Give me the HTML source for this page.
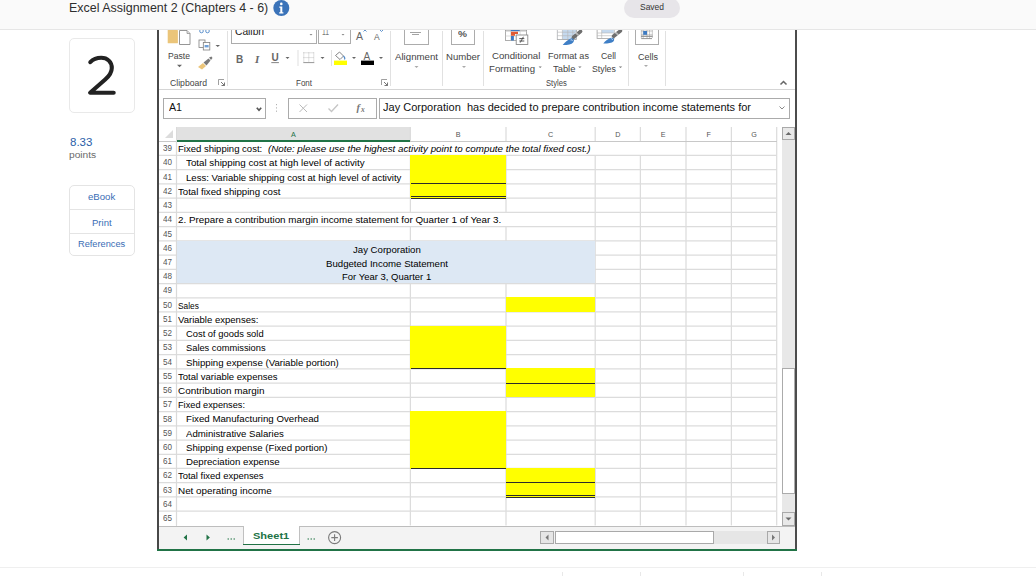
<!DOCTYPE html>
<html><head><meta charset="utf-8"><style>
html,body{margin:0;padding:0;}
body{width:1036px;height:576px;overflow:hidden;position:relative;background:#fff;font-family:"Liberation Sans", sans-serif;}
</style></head><body><div style="position:absolute;left:69px;top:38.3px;width:66px;height:75px;background:transparent;border:1px solid #e9e9e9;border-radius:5px;box-sizing:border-box;"></div><svg style="position:absolute;left:0;top:0" width="140" height="110"><path d="M90.3 62.2 C93 59.4 97 57.8 101.2 57.8 C107.5 57.8 111.8 62 111.8 68 C111.8 72.8 109.2 76 105.2 79.6 L90.1 92.7 L113.7 92.7" fill="none" stroke="#222" stroke-width="4.1" stroke-linecap="round" stroke-linejoin="round"/></svg><div style="position:absolute;left:69px;top:185.3px;width:66px;height:71.2px;background:#fff;border:1px solid #e4e4e4;border-radius:5px;box-sizing:border-box;"></div><div style="position:absolute;left:70px;top:209px;width:64px;height:1px;background:#e4e4e4;"></div><div style="position:absolute;left:70px;top:233px;width:64px;height:1px;background:#e4e4e4;"></div><div style="position:absolute;left:157px;top:30px;width:2px;height:521px;background:#484848;"></div><div style="position:absolute;left:795px;top:30px;width:2px;height:521px;background:#4c4c4c;"></div><div style="position:absolute;left:227px;top:31px;width:1px;height:55px;background:#e1e1e1;"></div><div style="position:absolute;left:390px;top:31px;width:1px;height:55px;background:#e1e1e1;"></div><div style="position:absolute;left:442px;top:31px;width:1px;height:55px;background:#e1e1e1;"></div><div style="position:absolute;left:483px;top:31px;width:1px;height:55px;background:#e1e1e1;"></div><div style="position:absolute;left:628px;top:31px;width:1px;height:55px;background:#e1e1e1;"></div><div style="position:absolute;left:665px;top:31px;width:1px;height:55px;background:#e1e1e1;"></div><div style="position:absolute;left:159px;top:89px;width:636px;height:1px;background:#d5d5d5;"></div><div style="position:absolute;left:163px;top:98px;width:103px;height:21px;background:#fff;border:1px solid #ababab;box-sizing:border-box;"></div><div style="position:absolute;left:288px;top:98px;width:89px;height:21px;background:#fff;border:1px solid #ababab;box-sizing:border-box;"></div><div style="position:absolute;left:379px;top:98px;width:411px;height:21px;background:#fff;border:1px solid #ababab;box-sizing:border-box;"></div><div style="position:absolute;left:159px;top:127px;width:618px;height:14px;background:#fff;"></div><div style="position:absolute;left:177px;top:127px;width:233.4px;height:14px;background:#e1e1e1;"></div><div style="position:absolute;left:177px;top:139.6px;width:233.4px;height:1.6px;background:#217346;"></div><div style="position:absolute;left:159px;top:141px;width:618px;height:1px;background:#d0d0d0;"></div><svg style="position:absolute;left:0;top:0" width="1036" height="576" viewBox="0 0 1036 576"><line x1="159.00" y1="155.48" x2="777.00" y2="155.48" stroke="#dcdcdc" stroke-width="1.25"/><line x1="159.00" y1="169.71" x2="777.00" y2="169.71" stroke="#dcdcdc" stroke-width="1.25"/><line x1="159.00" y1="183.93" x2="777.00" y2="183.93" stroke="#dcdcdc" stroke-width="1.25"/><line x1="159.00" y1="198.16" x2="777.00" y2="198.16" stroke="#dcdcdc" stroke-width="1.25"/><line x1="159.00" y1="212.39" x2="777.00" y2="212.39" stroke="#dcdcdc" stroke-width="1.25"/><line x1="159.00" y1="226.62" x2="777.00" y2="226.62" stroke="#dcdcdc" stroke-width="1.25"/><line x1="159.00" y1="240.85" x2="777.00" y2="240.85" stroke="#dcdcdc" stroke-width="1.25"/><line x1="159.00" y1="255.07" x2="777.00" y2="255.07" stroke="#dcdcdc" stroke-width="1.25"/><line x1="159.00" y1="269.30" x2="777.00" y2="269.30" stroke="#dcdcdc" stroke-width="1.25"/><line x1="159.00" y1="283.53" x2="777.00" y2="283.53" stroke="#dcdcdc" stroke-width="1.25"/><line x1="159.00" y1="297.76" x2="777.00" y2="297.76" stroke="#dcdcdc" stroke-width="1.25"/><line x1="159.00" y1="311.99" x2="777.00" y2="311.99" stroke="#dcdcdc" stroke-width="1.25"/><line x1="159.00" y1="326.21" x2="777.00" y2="326.21" stroke="#dcdcdc" stroke-width="1.25"/><line x1="159.00" y1="340.44" x2="777.00" y2="340.44" stroke="#dcdcdc" stroke-width="1.25"/><line x1="159.00" y1="354.67" x2="777.00" y2="354.67" stroke="#dcdcdc" stroke-width="1.25"/><line x1="159.00" y1="368.90" x2="777.00" y2="368.90" stroke="#dcdcdc" stroke-width="1.25"/><line x1="159.00" y1="383.13" x2="777.00" y2="383.13" stroke="#dcdcdc" stroke-width="1.25"/><line x1="159.00" y1="397.35" x2="777.00" y2="397.35" stroke="#dcdcdc" stroke-width="1.25"/><line x1="159.00" y1="411.58" x2="777.00" y2="411.58" stroke="#dcdcdc" stroke-width="1.25"/><line x1="159.00" y1="425.81" x2="777.00" y2="425.81" stroke="#dcdcdc" stroke-width="1.25"/><line x1="159.00" y1="440.04" x2="777.00" y2="440.04" stroke="#dcdcdc" stroke-width="1.25"/><line x1="159.00" y1="454.27" x2="777.00" y2="454.27" stroke="#dcdcdc" stroke-width="1.25"/><line x1="159.00" y1="468.49" x2="777.00" y2="468.49" stroke="#dcdcdc" stroke-width="1.25"/><line x1="159.00" y1="482.72" x2="777.00" y2="482.72" stroke="#dcdcdc" stroke-width="1.25"/><line x1="159.00" y1="496.95" x2="777.00" y2="496.95" stroke="#dcdcdc" stroke-width="1.25"/><line x1="159.00" y1="511.18" x2="777.00" y2="511.18" stroke="#dcdcdc" stroke-width="1.25"/><line x1="176.50" y1="141.25" x2="176.50" y2="155.48" stroke="#dcdcdc" stroke-width="1.25"/><line x1="176.50" y1="155.48" x2="176.50" y2="169.71" stroke="#dcdcdc" stroke-width="1.25"/><line x1="176.50" y1="169.71" x2="176.50" y2="183.93" stroke="#dcdcdc" stroke-width="1.25"/><line x1="176.50" y1="183.93" x2="176.50" y2="198.16" stroke="#dcdcdc" stroke-width="1.25"/><line x1="176.50" y1="198.16" x2="176.50" y2="212.39" stroke="#dcdcdc" stroke-width="1.25"/><line x1="176.50" y1="212.39" x2="176.50" y2="226.62" stroke="#dcdcdc" stroke-width="1.25"/><line x1="176.50" y1="226.62" x2="176.50" y2="240.85" stroke="#dcdcdc" stroke-width="1.25"/><line x1="176.50" y1="240.85" x2="176.50" y2="255.07" stroke="#dcdcdc" stroke-width="1.25"/><line x1="176.50" y1="255.07" x2="176.50" y2="269.30" stroke="#dcdcdc" stroke-width="1.25"/><line x1="176.50" y1="269.30" x2="176.50" y2="283.53" stroke="#dcdcdc" stroke-width="1.25"/><line x1="176.50" y1="283.53" x2="176.50" y2="297.76" stroke="#dcdcdc" stroke-width="1.25"/><line x1="176.50" y1="297.76" x2="176.50" y2="311.99" stroke="#dcdcdc" stroke-width="1.25"/><line x1="176.50" y1="311.99" x2="176.50" y2="326.21" stroke="#dcdcdc" stroke-width="1.25"/><line x1="176.50" y1="326.21" x2="176.50" y2="340.44" stroke="#dcdcdc" stroke-width="1.25"/><line x1="176.50" y1="340.44" x2="176.50" y2="354.67" stroke="#dcdcdc" stroke-width="1.25"/><line x1="176.50" y1="354.67" x2="176.50" y2="368.90" stroke="#dcdcdc" stroke-width="1.25"/><line x1="176.50" y1="368.90" x2="176.50" y2="383.13" stroke="#dcdcdc" stroke-width="1.25"/><line x1="176.50" y1="383.13" x2="176.50" y2="397.35" stroke="#dcdcdc" stroke-width="1.25"/><line x1="176.50" y1="397.35" x2="176.50" y2="411.58" stroke="#dcdcdc" stroke-width="1.25"/><line x1="176.50" y1="411.58" x2="176.50" y2="425.81" stroke="#dcdcdc" stroke-width="1.25"/><line x1="176.50" y1="425.81" x2="176.50" y2="440.04" stroke="#dcdcdc" stroke-width="1.25"/><line x1="176.50" y1="440.04" x2="176.50" y2="454.27" stroke="#dcdcdc" stroke-width="1.25"/><line x1="176.50" y1="454.27" x2="176.50" y2="468.49" stroke="#dcdcdc" stroke-width="1.25"/><line x1="176.50" y1="468.49" x2="176.50" y2="482.72" stroke="#dcdcdc" stroke-width="1.25"/><line x1="176.50" y1="482.72" x2="176.50" y2="496.95" stroke="#dcdcdc" stroke-width="1.25"/><line x1="176.50" y1="496.95" x2="176.50" y2="511.18" stroke="#dcdcdc" stroke-width="1.25"/><line x1="176.50" y1="511.18" x2="176.50" y2="525.41" stroke="#dcdcdc" stroke-width="1.25"/><line x1="410.40" y1="155.48" x2="410.40" y2="169.71" stroke="#dcdcdc" stroke-width="1.25"/><line x1="410.40" y1="169.71" x2="410.40" y2="183.93" stroke="#dcdcdc" stroke-width="1.25"/><line x1="410.40" y1="183.93" x2="410.40" y2="198.16" stroke="#dcdcdc" stroke-width="1.25"/><line x1="410.40" y1="198.16" x2="410.40" y2="212.39" stroke="#dcdcdc" stroke-width="1.25"/><line x1="410.40" y1="226.62" x2="410.40" y2="240.85" stroke="#dcdcdc" stroke-width="1.25"/><line x1="410.40" y1="283.53" x2="410.40" y2="297.76" stroke="#dcdcdc" stroke-width="1.25"/><line x1="410.40" y1="297.76" x2="410.40" y2="311.99" stroke="#dcdcdc" stroke-width="1.25"/><line x1="410.40" y1="311.99" x2="410.40" y2="326.21" stroke="#dcdcdc" stroke-width="1.25"/><line x1="410.40" y1="326.21" x2="410.40" y2="340.44" stroke="#dcdcdc" stroke-width="1.25"/><line x1="410.40" y1="340.44" x2="410.40" y2="354.67" stroke="#dcdcdc" stroke-width="1.25"/><line x1="410.40" y1="354.67" x2="410.40" y2="368.90" stroke="#dcdcdc" stroke-width="1.25"/><line x1="410.40" y1="368.90" x2="410.40" y2="383.13" stroke="#dcdcdc" stroke-width="1.25"/><line x1="410.40" y1="383.13" x2="410.40" y2="397.35" stroke="#dcdcdc" stroke-width="1.25"/><line x1="410.40" y1="397.35" x2="410.40" y2="411.58" stroke="#dcdcdc" stroke-width="1.25"/><line x1="410.40" y1="411.58" x2="410.40" y2="425.81" stroke="#dcdcdc" stroke-width="1.25"/><line x1="410.40" y1="425.81" x2="410.40" y2="440.04" stroke="#dcdcdc" stroke-width="1.25"/><line x1="410.40" y1="440.04" x2="410.40" y2="454.27" stroke="#dcdcdc" stroke-width="1.25"/><line x1="410.40" y1="454.27" x2="410.40" y2="468.49" stroke="#dcdcdc" stroke-width="1.25"/><line x1="410.40" y1="468.49" x2="410.40" y2="482.72" stroke="#dcdcdc" stroke-width="1.25"/><line x1="410.40" y1="482.72" x2="410.40" y2="496.95" stroke="#dcdcdc" stroke-width="1.25"/><line x1="410.40" y1="496.95" x2="410.40" y2="511.18" stroke="#dcdcdc" stroke-width="1.25"/><line x1="410.40" y1="511.18" x2="410.40" y2="525.41" stroke="#dcdcdc" stroke-width="1.25"/><line x1="506.00" y1="155.48" x2="506.00" y2="169.71" stroke="#dcdcdc" stroke-width="1.25"/><line x1="506.00" y1="169.71" x2="506.00" y2="183.93" stroke="#dcdcdc" stroke-width="1.25"/><line x1="506.00" y1="183.93" x2="506.00" y2="198.16" stroke="#dcdcdc" stroke-width="1.25"/><line x1="506.00" y1="198.16" x2="506.00" y2="212.39" stroke="#dcdcdc" stroke-width="1.25"/><line x1="506.00" y1="226.62" x2="506.00" y2="240.85" stroke="#dcdcdc" stroke-width="1.25"/><line x1="506.00" y1="283.53" x2="506.00" y2="297.76" stroke="#dcdcdc" stroke-width="1.25"/><line x1="506.00" y1="297.76" x2="506.00" y2="311.99" stroke="#dcdcdc" stroke-width="1.25"/><line x1="506.00" y1="311.99" x2="506.00" y2="326.21" stroke="#dcdcdc" stroke-width="1.25"/><line x1="506.00" y1="326.21" x2="506.00" y2="340.44" stroke="#dcdcdc" stroke-width="1.25"/><line x1="506.00" y1="340.44" x2="506.00" y2="354.67" stroke="#dcdcdc" stroke-width="1.25"/><line x1="506.00" y1="354.67" x2="506.00" y2="368.90" stroke="#dcdcdc" stroke-width="1.25"/><line x1="506.00" y1="368.90" x2="506.00" y2="383.13" stroke="#dcdcdc" stroke-width="1.25"/><line x1="506.00" y1="383.13" x2="506.00" y2="397.35" stroke="#dcdcdc" stroke-width="1.25"/><line x1="506.00" y1="397.35" x2="506.00" y2="411.58" stroke="#dcdcdc" stroke-width="1.25"/><line x1="506.00" y1="411.58" x2="506.00" y2="425.81" stroke="#dcdcdc" stroke-width="1.25"/><line x1="506.00" y1="425.81" x2="506.00" y2="440.04" stroke="#dcdcdc" stroke-width="1.25"/><line x1="506.00" y1="440.04" x2="506.00" y2="454.27" stroke="#dcdcdc" stroke-width="1.25"/><line x1="506.00" y1="454.27" x2="506.00" y2="468.49" stroke="#dcdcdc" stroke-width="1.25"/><line x1="506.00" y1="468.49" x2="506.00" y2="482.72" stroke="#dcdcdc" stroke-width="1.25"/><line x1="506.00" y1="482.72" x2="506.00" y2="496.95" stroke="#dcdcdc" stroke-width="1.25"/><line x1="506.00" y1="496.95" x2="506.00" y2="511.18" stroke="#dcdcdc" stroke-width="1.25"/><line x1="506.00" y1="511.18" x2="506.00" y2="525.41" stroke="#dcdcdc" stroke-width="1.25"/><line x1="595.20" y1="155.48" x2="595.20" y2="169.71" stroke="#dcdcdc" stroke-width="1.25"/><line x1="595.20" y1="169.71" x2="595.20" y2="183.93" stroke="#dcdcdc" stroke-width="1.25"/><line x1="595.20" y1="183.93" x2="595.20" y2="198.16" stroke="#dcdcdc" stroke-width="1.25"/><line x1="595.20" y1="198.16" x2="595.20" y2="212.39" stroke="#dcdcdc" stroke-width="1.25"/><line x1="595.20" y1="212.39" x2="595.20" y2="226.62" stroke="#dcdcdc" stroke-width="1.25"/><line x1="595.20" y1="226.62" x2="595.20" y2="240.85" stroke="#dcdcdc" stroke-width="1.25"/><line x1="595.20" y1="240.85" x2="595.20" y2="255.07" stroke="#dcdcdc" stroke-width="1.25"/><line x1="595.20" y1="255.07" x2="595.20" y2="269.30" stroke="#dcdcdc" stroke-width="1.25"/><line x1="595.20" y1="269.30" x2="595.20" y2="283.53" stroke="#dcdcdc" stroke-width="1.25"/><line x1="595.20" y1="283.53" x2="595.20" y2="297.76" stroke="#dcdcdc" stroke-width="1.25"/><line x1="595.20" y1="297.76" x2="595.20" y2="311.99" stroke="#dcdcdc" stroke-width="1.25"/><line x1="595.20" y1="311.99" x2="595.20" y2="326.21" stroke="#dcdcdc" stroke-width="1.25"/><line x1="595.20" y1="326.21" x2="595.20" y2="340.44" stroke="#dcdcdc" stroke-width="1.25"/><line x1="595.20" y1="340.44" x2="595.20" y2="354.67" stroke="#dcdcdc" stroke-width="1.25"/><line x1="595.20" y1="354.67" x2="595.20" y2="368.90" stroke="#dcdcdc" stroke-width="1.25"/><line x1="595.20" y1="368.90" x2="595.20" y2="383.13" stroke="#dcdcdc" stroke-width="1.25"/><line x1="595.20" y1="383.13" x2="595.20" y2="397.35" stroke="#dcdcdc" stroke-width="1.25"/><line x1="595.20" y1="397.35" x2="595.20" y2="411.58" stroke="#dcdcdc" stroke-width="1.25"/><line x1="595.20" y1="411.58" x2="595.20" y2="425.81" stroke="#dcdcdc" stroke-width="1.25"/><line x1="595.20" y1="425.81" x2="595.20" y2="440.04" stroke="#dcdcdc" stroke-width="1.25"/><line x1="595.20" y1="440.04" x2="595.20" y2="454.27" stroke="#dcdcdc" stroke-width="1.25"/><line x1="595.20" y1="454.27" x2="595.20" y2="468.49" stroke="#dcdcdc" stroke-width="1.25"/><line x1="595.20" y1="468.49" x2="595.20" y2="482.72" stroke="#dcdcdc" stroke-width="1.25"/><line x1="595.20" y1="482.72" x2="595.20" y2="496.95" stroke="#dcdcdc" stroke-width="1.25"/><line x1="595.20" y1="496.95" x2="595.20" y2="511.18" stroke="#dcdcdc" stroke-width="1.25"/><line x1="595.20" y1="511.18" x2="595.20" y2="525.41" stroke="#dcdcdc" stroke-width="1.25"/><line x1="640.40" y1="155.48" x2="640.40" y2="169.71" stroke="#dcdcdc" stroke-width="1.25"/><line x1="640.40" y1="169.71" x2="640.40" y2="183.93" stroke="#dcdcdc" stroke-width="1.25"/><line x1="640.40" y1="183.93" x2="640.40" y2="198.16" stroke="#dcdcdc" stroke-width="1.25"/><line x1="640.40" y1="198.16" x2="640.40" y2="212.39" stroke="#dcdcdc" stroke-width="1.25"/><line x1="640.40" y1="212.39" x2="640.40" y2="226.62" stroke="#dcdcdc" stroke-width="1.25"/><line x1="640.40" y1="226.62" x2="640.40" y2="240.85" stroke="#dcdcdc" stroke-width="1.25"/><line x1="640.40" y1="240.85" x2="640.40" y2="255.07" stroke="#dcdcdc" stroke-width="1.25"/><line x1="640.40" y1="255.07" x2="640.40" y2="269.30" stroke="#dcdcdc" stroke-width="1.25"/><line x1="640.40" y1="269.30" x2="640.40" y2="283.53" stroke="#dcdcdc" stroke-width="1.25"/><line x1="640.40" y1="283.53" x2="640.40" y2="297.76" stroke="#dcdcdc" stroke-width="1.25"/><line x1="640.40" y1="297.76" x2="640.40" y2="311.99" stroke="#dcdcdc" stroke-width="1.25"/><line x1="640.40" y1="311.99" x2="640.40" y2="326.21" stroke="#dcdcdc" stroke-width="1.25"/><line x1="640.40" y1="326.21" x2="640.40" y2="340.44" stroke="#dcdcdc" stroke-width="1.25"/><line x1="640.40" y1="340.44" x2="640.40" y2="354.67" stroke="#dcdcdc" stroke-width="1.25"/><line x1="640.40" y1="354.67" x2="640.40" y2="368.90" stroke="#dcdcdc" stroke-width="1.25"/><line x1="640.40" y1="368.90" x2="640.40" y2="383.13" stroke="#dcdcdc" stroke-width="1.25"/><line x1="640.40" y1="383.13" x2="640.40" y2="397.35" stroke="#dcdcdc" stroke-width="1.25"/><line x1="640.40" y1="397.35" x2="640.40" y2="411.58" stroke="#dcdcdc" stroke-width="1.25"/><line x1="640.40" y1="411.58" x2="640.40" y2="425.81" stroke="#dcdcdc" stroke-width="1.25"/><line x1="640.40" y1="425.81" x2="640.40" y2="440.04" stroke="#dcdcdc" stroke-width="1.25"/><line x1="640.40" y1="440.04" x2="640.40" y2="454.27" stroke="#dcdcdc" stroke-width="1.25"/><line x1="640.40" y1="454.27" x2="640.40" y2="468.49" stroke="#dcdcdc" stroke-width="1.25"/><line x1="640.40" y1="468.49" x2="640.40" y2="482.72" stroke="#dcdcdc" stroke-width="1.25"/><line x1="640.40" y1="482.72" x2="640.40" y2="496.95" stroke="#dcdcdc" stroke-width="1.25"/><line x1="640.40" y1="496.95" x2="640.40" y2="511.18" stroke="#dcdcdc" stroke-width="1.25"/><line x1="640.40" y1="511.18" x2="640.40" y2="525.41" stroke="#dcdcdc" stroke-width="1.25"/><line x1="686.00" y1="141.25" x2="686.00" y2="155.48" stroke="#dcdcdc" stroke-width="1.25"/><line x1="686.00" y1="155.48" x2="686.00" y2="169.71" stroke="#dcdcdc" stroke-width="1.25"/><line x1="686.00" y1="169.71" x2="686.00" y2="183.93" stroke="#dcdcdc" stroke-width="1.25"/><line x1="686.00" y1="183.93" x2="686.00" y2="198.16" stroke="#dcdcdc" stroke-width="1.25"/><line x1="686.00" y1="198.16" x2="686.00" y2="212.39" stroke="#dcdcdc" stroke-width="1.25"/><line x1="686.00" y1="212.39" x2="686.00" y2="226.62" stroke="#dcdcdc" stroke-width="1.25"/><line x1="686.00" y1="226.62" x2="686.00" y2="240.85" stroke="#dcdcdc" stroke-width="1.25"/><line x1="686.00" y1="240.85" x2="686.00" y2="255.07" stroke="#dcdcdc" stroke-width="1.25"/><line x1="686.00" y1="255.07" x2="686.00" y2="269.30" stroke="#dcdcdc" stroke-width="1.25"/><line x1="686.00" y1="269.30" x2="686.00" y2="283.53" stroke="#dcdcdc" stroke-width="1.25"/><line x1="686.00" y1="283.53" x2="686.00" y2="297.76" stroke="#dcdcdc" stroke-width="1.25"/><line x1="686.00" y1="297.76" x2="686.00" y2="311.99" stroke="#dcdcdc" stroke-width="1.25"/><line x1="686.00" y1="311.99" x2="686.00" y2="326.21" stroke="#dcdcdc" stroke-width="1.25"/><line x1="686.00" y1="326.21" x2="686.00" y2="340.44" stroke="#dcdcdc" stroke-width="1.25"/><line x1="686.00" y1="340.44" x2="686.00" y2="354.67" stroke="#dcdcdc" stroke-width="1.25"/><line x1="686.00" y1="354.67" x2="686.00" y2="368.90" stroke="#dcdcdc" stroke-width="1.25"/><line x1="686.00" y1="368.90" x2="686.00" y2="383.13" stroke="#dcdcdc" stroke-width="1.25"/><line x1="686.00" y1="383.13" x2="686.00" y2="397.35" stroke="#dcdcdc" stroke-width="1.25"/><line x1="686.00" y1="397.35" x2="686.00" y2="411.58" stroke="#dcdcdc" stroke-width="1.25"/><line x1="686.00" y1="411.58" x2="686.00" y2="425.81" stroke="#dcdcdc" stroke-width="1.25"/><line x1="686.00" y1="425.81" x2="686.00" y2="440.04" stroke="#dcdcdc" stroke-width="1.25"/><line x1="686.00" y1="440.04" x2="686.00" y2="454.27" stroke="#dcdcdc" stroke-width="1.25"/><line x1="686.00" y1="454.27" x2="686.00" y2="468.49" stroke="#dcdcdc" stroke-width="1.25"/><line x1="686.00" y1="468.49" x2="686.00" y2="482.72" stroke="#dcdcdc" stroke-width="1.25"/><line x1="686.00" y1="482.72" x2="686.00" y2="496.95" stroke="#dcdcdc" stroke-width="1.25"/><line x1="686.00" y1="496.95" x2="686.00" y2="511.18" stroke="#dcdcdc" stroke-width="1.25"/><line x1="686.00" y1="511.18" x2="686.00" y2="525.41" stroke="#dcdcdc" stroke-width="1.25"/><line x1="731.40" y1="141.25" x2="731.40" y2="155.48" stroke="#dcdcdc" stroke-width="1.25"/><line x1="731.40" y1="155.48" x2="731.40" y2="169.71" stroke="#dcdcdc" stroke-width="1.25"/><line x1="731.40" y1="169.71" x2="731.40" y2="183.93" stroke="#dcdcdc" stroke-width="1.25"/><line x1="731.40" y1="183.93" x2="731.40" y2="198.16" stroke="#dcdcdc" stroke-width="1.25"/><line x1="731.40" y1="198.16" x2="731.40" y2="212.39" stroke="#dcdcdc" stroke-width="1.25"/><line x1="731.40" y1="212.39" x2="731.40" y2="226.62" stroke="#dcdcdc" stroke-width="1.25"/><line x1="731.40" y1="226.62" x2="731.40" y2="240.85" stroke="#dcdcdc" stroke-width="1.25"/><line x1="731.40" y1="240.85" x2="731.40" y2="255.07" stroke="#dcdcdc" stroke-width="1.25"/><line x1="731.40" y1="255.07" x2="731.40" y2="269.30" stroke="#dcdcdc" stroke-width="1.25"/><line x1="731.40" y1="269.30" x2="731.40" y2="283.53" stroke="#dcdcdc" stroke-width="1.25"/><line x1="731.40" y1="283.53" x2="731.40" y2="297.76" stroke="#dcdcdc" stroke-width="1.25"/><line x1="731.40" y1="297.76" x2="731.40" y2="311.99" stroke="#dcdcdc" stroke-width="1.25"/><line x1="731.40" y1="311.99" x2="731.40" y2="326.21" stroke="#dcdcdc" stroke-width="1.25"/><line x1="731.40" y1="326.21" x2="731.40" y2="340.44" stroke="#dcdcdc" stroke-width="1.25"/><line x1="731.40" y1="340.44" x2="731.40" y2="354.67" stroke="#dcdcdc" stroke-width="1.25"/><line x1="731.40" y1="354.67" x2="731.40" y2="368.90" stroke="#dcdcdc" stroke-width="1.25"/><line x1="731.40" y1="368.90" x2="731.40" y2="383.13" stroke="#dcdcdc" stroke-width="1.25"/><line x1="731.40" y1="383.13" x2="731.40" y2="397.35" stroke="#dcdcdc" stroke-width="1.25"/><line x1="731.40" y1="397.35" x2="731.40" y2="411.58" stroke="#dcdcdc" stroke-width="1.25"/><line x1="731.40" y1="411.58" x2="731.40" y2="425.81" stroke="#dcdcdc" stroke-width="1.25"/><line x1="731.40" y1="425.81" x2="731.40" y2="440.04" stroke="#dcdcdc" stroke-width="1.25"/><line x1="731.40" y1="440.04" x2="731.40" y2="454.27" stroke="#dcdcdc" stroke-width="1.25"/><line x1="731.40" y1="454.27" x2="731.40" y2="468.49" stroke="#dcdcdc" stroke-width="1.25"/><line x1="731.40" y1="468.49" x2="731.40" y2="482.72" stroke="#dcdcdc" stroke-width="1.25"/><line x1="731.40" y1="482.72" x2="731.40" y2="496.95" stroke="#dcdcdc" stroke-width="1.25"/><line x1="731.40" y1="496.95" x2="731.40" y2="511.18" stroke="#dcdcdc" stroke-width="1.25"/><line x1="731.40" y1="511.18" x2="731.40" y2="525.41" stroke="#dcdcdc" stroke-width="1.25"/><line x1="776.70" y1="141.25" x2="776.70" y2="155.48" stroke="#dcdcdc" stroke-width="1.25"/><line x1="776.70" y1="155.48" x2="776.70" y2="169.71" stroke="#dcdcdc" stroke-width="1.25"/><line x1="776.70" y1="169.71" x2="776.70" y2="183.93" stroke="#dcdcdc" stroke-width="1.25"/><line x1="776.70" y1="183.93" x2="776.70" y2="198.16" stroke="#dcdcdc" stroke-width="1.25"/><line x1="776.70" y1="198.16" x2="776.70" y2="212.39" stroke="#dcdcdc" stroke-width="1.25"/><line x1="776.70" y1="212.39" x2="776.70" y2="226.62" stroke="#dcdcdc" stroke-width="1.25"/><line x1="776.70" y1="226.62" x2="776.70" y2="240.85" stroke="#dcdcdc" stroke-width="1.25"/><line x1="776.70" y1="240.85" x2="776.70" y2="255.07" stroke="#dcdcdc" stroke-width="1.25"/><line x1="776.70" y1="255.07" x2="776.70" y2="269.30" stroke="#dcdcdc" stroke-width="1.25"/><line x1="776.70" y1="269.30" x2="776.70" y2="283.53" stroke="#dcdcdc" stroke-width="1.25"/><line x1="776.70" y1="283.53" x2="776.70" y2="297.76" stroke="#dcdcdc" stroke-width="1.25"/><line x1="776.70" y1="297.76" x2="776.70" y2="311.99" stroke="#dcdcdc" stroke-width="1.25"/><line x1="776.70" y1="311.99" x2="776.70" y2="326.21" stroke="#dcdcdc" stroke-width="1.25"/><line x1="776.70" y1="326.21" x2="776.70" y2="340.44" stroke="#dcdcdc" stroke-width="1.25"/><line x1="776.70" y1="340.44" x2="776.70" y2="354.67" stroke="#dcdcdc" stroke-width="1.25"/><line x1="776.70" y1="354.67" x2="776.70" y2="368.90" stroke="#dcdcdc" stroke-width="1.25"/><line x1="776.70" y1="368.90" x2="776.70" y2="383.13" stroke="#dcdcdc" stroke-width="1.25"/><line x1="776.70" y1="383.13" x2="776.70" y2="397.35" stroke="#dcdcdc" stroke-width="1.25"/><line x1="776.70" y1="397.35" x2="776.70" y2="411.58" stroke="#dcdcdc" stroke-width="1.25"/><line x1="776.70" y1="411.58" x2="776.70" y2="425.81" stroke="#dcdcdc" stroke-width="1.25"/><line x1="776.70" y1="425.81" x2="776.70" y2="440.04" stroke="#dcdcdc" stroke-width="1.25"/><line x1="776.70" y1="440.04" x2="776.70" y2="454.27" stroke="#dcdcdc" stroke-width="1.25"/><line x1="776.70" y1="454.27" x2="776.70" y2="468.49" stroke="#dcdcdc" stroke-width="1.25"/><line x1="776.70" y1="468.49" x2="776.70" y2="482.72" stroke="#dcdcdc" stroke-width="1.25"/><line x1="776.70" y1="482.72" x2="776.70" y2="496.95" stroke="#dcdcdc" stroke-width="1.25"/><line x1="776.70" y1="496.95" x2="776.70" y2="511.18" stroke="#dcdcdc" stroke-width="1.25"/><line x1="776.70" y1="511.18" x2="776.70" y2="525.41" stroke="#dcdcdc" stroke-width="1.25"/><line x1="410.40" y1="127.00" x2="410.40" y2="141.00" stroke="#dcdcdc" stroke-width="1.25"/><line x1="506.00" y1="127.00" x2="506.00" y2="141.00" stroke="#dcdcdc" stroke-width="1.25"/><line x1="595.20" y1="127.00" x2="595.20" y2="141.00" stroke="#dcdcdc" stroke-width="1.25"/><line x1="640.40" y1="127.00" x2="640.40" y2="141.00" stroke="#dcdcdc" stroke-width="1.25"/><line x1="686.00" y1="127.00" x2="686.00" y2="141.00" stroke="#dcdcdc" stroke-width="1.25"/><line x1="731.40" y1="127.00" x2="731.40" y2="141.00" stroke="#dcdcdc" stroke-width="1.25"/><line x1="776.70" y1="127.00" x2="776.70" y2="141.00" stroke="#dcdcdc" stroke-width="1.25"/></svg><div style="position:absolute;left:159px;top:140.75px;width:618px;height:1px;background:#c8c8c8;"></div><div style="position:absolute;left:177px;top:139.5px;width:233.4px;height:2px;background:#217346;"></div><div style="position:absolute;left:176px;top:127px;width:1px;height:399px;background:#dadada;"></div><svg style="position:absolute;left:163px;top:128px" width="12" height="12"><path d="M10 2 L10 10 L2 10 Z" fill="#dcdcdc"/></svg><div style="position:absolute;left:176.6px;top:240.546px;width:418.40000000000003px;height:42.78399999999997px;background:#dde8f4;"></div><div style="position:absolute;left:410.09999999999997px;top:155.078px;width:95.60000000000002px;height:43.184px;background:#ffff00;"></div><div style="position:absolute;left:505.7px;top:297.35800000000006px;width:89.20000000000005px;height:14.727999999999952px;background:#ffff00;"></div><div style="position:absolute;left:410.09999999999997px;top:325.814px;width:95.60000000000002px;height:43.184000000000026px;background:#ffff00;"></div><div style="position:absolute;left:505.7px;top:368.49800000000005px;width:89.20000000000005px;height:28.95599999999996px;background:#ffff00;"></div><div style="position:absolute;left:410.09999999999997px;top:411.182px;width:95.60000000000002px;height:57.41199999999998px;background:#ffff00;"></div><div style="position:absolute;left:505.7px;top:468.094px;width:89.20000000000005px;height:28.956000000000017px;background:#ffff00;"></div><div style="position:absolute;left:410.59999999999997px;top:183.434px;width:95.10000000000002px;height:1.0px;background:#2b2b2b;"></div><div style="position:absolute;left:410.59999999999997px;top:196.262px;width:95.10000000000002px;height:1.0px;background:#2b2b2b;"></div><div style="position:absolute;left:410.59999999999997px;top:198.362px;width:95.10000000000002px;height:1.0px;background:#2b2b2b;"></div><div style="position:absolute;left:410.59999999999997px;top:368.398px;width:95.10000000000002px;height:1.0px;background:#2b2b2b;"></div><div style="position:absolute;left:506.2px;top:382.626px;width:88.70000000000005px;height:1.0px;background:#2b2b2b;"></div><div style="position:absolute;left:410.59999999999997px;top:467.99399999999997px;width:95.10000000000002px;height:1.0px;background:#2b2b2b;"></div><div style="position:absolute;left:506.2px;top:482.222px;width:88.70000000000005px;height:1.0px;background:#2b2b2b;"></div><div style="position:absolute;left:506.2px;top:495.04999999999995px;width:88.70000000000005px;height:1.0px;background:#2b2b2b;"></div><div style="position:absolute;left:506.2px;top:497.15px;width:88.70000000000005px;height:1.0px;background:#2b2b2b;"></div><div style="position:absolute;left:782px;top:127px;width:13px;height:398.5px;background:#e8e8e8;"></div><div style="position:absolute;left:782px;top:127px;width:13px;height:13px;background:#e8e8e8;border:1px solid #a9a9a9;box-sizing:border-box;"></div><svg style="position:absolute;left:782px;top:127px" width="13" height="13"><path d="M3.5 8 L6.5 5 L9.5 8 Z" fill="#6a6a6a"/></svg><div style="position:absolute;left:782px;top:368px;width:13px;height:125.5px;background:#fff;border:1px solid #ababab;box-sizing:border-box;"></div><div style="position:absolute;left:782px;top:512px;width:13px;height:13.5px;background:#e8e8e8;border:1px solid #a9a9a9;box-sizing:border-box;"></div><svg style="position:absolute;left:782px;top:512px" width="13" height="13"><path d="M3.5 5.5 L6.5 8.5 L9.5 5.5 Z" fill="#6a6a6a"/></svg><div style="position:absolute;left:159px;top:525.5px;width:636px;height:24px;background:#f3f3f3;"></div><div style="position:absolute;left:159px;top:525.5px;width:636px;height:1px;background:#bdbdbd;"></div><div style="position:absolute;left:157px;top:549px;width:640px;height:2px;background:#217346;"></div><div style="position:absolute;left:243.3px;top:525.5px;width:56.5px;height:19.5px;background:#fff;border:1px solid #c0c0c0;border-top:none;box-sizing:border-box;"></div><div style="position:absolute;left:243.3px;top:543.6px;width:56.5px;height:1.6px;background:#217346;"></div><svg style="position:absolute;left:180px;top:532px" width="40" height="12"><path d="M7 2.5 L3.6 5.5 L7 8.5 Z" fill="#217346"/><path d="M26.5 2.5 L29.9 5.5 L26.5 8.5 Z" fill="#217346"/></svg><svg style="position:absolute;left:226px;top:536px" width="12" height="5"><circle cx="2.2" cy="3" r="0.75" fill="#2f7d50"/><circle cx="5.2" cy="3" r="0.75" fill="#2f7d50"/><circle cx="8.2" cy="3" r="0.75" fill="#2f7d50"/></svg><svg style="position:absolute;left:306px;top:536px" width="12" height="5"><circle cx="2.2" cy="3" r="0.75" fill="#2f7d50"/><circle cx="5.2" cy="3" r="0.75" fill="#2f7d50"/><circle cx="8.2" cy="3" r="0.75" fill="#2f7d50"/></svg><svg style="position:absolute;left:327px;top:530px" width="15" height="15"><circle cx="7.6" cy="7.6" r="6" fill="none" stroke="#7a7a7a" stroke-width="1.1"/><path d="M7.6 4.3 V10.9 M4.3 7.6 H10.9" stroke="#7a7a7a" stroke-width="1.1"/></svg><div style="position:absolute;left:540.4px;top:531.2px;width:14px;height:12.6px;background:#e6e6e6;border:1px solid #a9a9a9;box-sizing:border-box;"></div><svg style="position:absolute;left:540px;top:531px" width="14" height="13"><path d="M8.5 3.5 L5.5 6.5 L8.5 9.5 Z" fill="#777"/></svg><div style="position:absolute;left:555px;top:531.2px;width:159px;height:12.6px;background:#fff;border:1px solid #a9a9a9;box-sizing:border-box;"></div><div style="position:absolute;left:714px;top:531.2px;width:53px;height:12.6px;background:#e6e6e6;"></div><div style="position:absolute;left:767px;top:531.2px;width:13px;height:12.6px;background:#e6e6e6;border:1px solid #a9a9a9;box-sizing:border-box;"></div><svg style="position:absolute;left:767px;top:531px" width="13" height="13"><path d="M5 3.5 L8 6.5 L5 9.5 Z" fill="#777"/></svg><div style="position:absolute;left:0px;top:567px;width:1036px;height:1px;background:#efefef;"></div><div style="position:absolute;left:562px;top:572px;width:1px;height:4px;background:#e8e8e8;"></div><div style="position:absolute;left:640px;top:572px;width:1px;height:4px;background:#e8e8e8;"></div><div style="position:absolute;left:743px;top:572px;width:1px;height:4px;background:#e8e8e8;"></div><div style="position:absolute;left:821px;top:572px;width:1px;height:4px;background:#e8e8e8;"></div><svg style="position:absolute;left:160px;top:28px" width="70" height="45"><rect x="7.7" y="2" width="10.2" height="13.3" fill="#ebc57a" rx="0.5"/><path d="M19.5 2.5 H27 L30 5.5 V16.5 H19.5 Z" fill="#fff" stroke="#8a8a8a" stroke-width="0.9"/><path d="M27 2.5 V5.5 H30" fill="#ddd" stroke="#8a8a8a" stroke-width="0.7"/><circle cx="41.5" cy="3" r="1.8" fill="none" stroke="#4d87c7" stroke-width="0.9"/><circle cx="47.5" cy="3" r="1.8" fill="none" stroke="#4d87c7" stroke-width="0.9"/><rect x="39" y="12" width="6" height="7.5" fill="#fff" stroke="#7f7f7f" stroke-width="0.8"/><rect x="43.3" y="14.5" width="6.5" height="7.5" fill="#fff" stroke="#7f7f7f" stroke-width="0.8"/><rect x="44.6" y="17" width="4" height="2.4" fill="#6fa0d8"/><path d="M55.5 17 L60 17 L57.75 19 Z" fill="#666"/></svg><svg style="position:absolute;left:176px;top:63.5px" width="8" height="4"><path d="M1 0.8 L6 0.8 L3.5 3.2 Z" fill="#666"/></svg><svg style="position:absolute;left:196px;top:56px" width="18" height="15"><path d="M2 11 L7 7 L10 10 L6 13.5 Z" fill="#ebc57a"/><path d="M7.5 6.5 L12.5 2.5 L14.5 4.5 L10.5 9.5 Z" fill="#7a7a7a"/><path d="M13 1.5 L15.5 0.5 L16.5 2 L15 4 Z" fill="#7a7a7a"/></svg><div style="position:absolute;left:231px;top:20px;width:86px;height:24px;border:1px solid #acacac;box-sizing:border-box;background:#fff"></div><div style="position:absolute;left:318px;top:20px;width:33px;height:24px;border:1px solid #acacac;box-sizing:border-box;background:#fff"></div><svg style="position:absolute;left:300px;top:30px" width="60" height="12"><path d="M9.5 4 H12.5 L11 5.5 Z" fill="#888"/><path d="M41.5 4 H44.5 L43 5.5 Z" fill="#888"/></svg><svg style="position:absolute;left:354.5px;top:25.5px" width="36" height="16"><text x="1" y="14" font-family="Liberation Sans" font-size="10.5" fill="#666">A</text><path d="M8.5 5.5 L10 4 L11.5 5.5" fill="none" stroke="#4d87c7" stroke-width="0.9"/><text x="19" y="14" font-family="Liberation Sans" font-size="8.5" fill="#666">A</text><path d="M25 4 L26.5 5.5 L28 4" fill="none" stroke="#4d87c7" stroke-width="0.9"/></svg><svg style="position:absolute;left:230px;top:50px" width="160" height="20"><text x="6" y="13" font-family="Liberation Sans" font-weight="bold" font-size="10" fill="#666">B</text><text x="25" y="12.8" font-family="Liberation Serif" font-style="italic" font-weight="bold" font-size="11" fill="#6a6a6a">I</text><text x="41.6" y="11.2" font-family="Liberation Sans" font-weight="bold" font-size="10" fill="#666">U</text><rect x="41.3" y="12.2" width="7.6" height="0.9" fill="#777"/><path d="M55.5 7 H59.5 L57.5 9 Z" fill="#666"/><rect x="67.5" y="-1" width="1" height="17" fill="#e0e0e0"/><path d="M73.8 2.5 V12 M78.8 2.5 V12 M83.8 2.5 V12 M73.5 2.8 H84 M73.5 7.6 H84" fill="none" stroke="#b0b0b0" stroke-width="0.8" stroke-dasharray="1 1"/><path d="M73.3 12.6 H84.3" stroke="#8a8a8a" stroke-width="0.9"/><path d="M90.5 7 H94.5 L92.5 9 Z" fill="#666"/><rect x="101" y="-1" width="1" height="17" fill="#e0e0e0"/><path d="M105.5 5.5 L109.5 2 L113.5 6 L110 9.5 Z" fill="#fff" stroke="#777" stroke-width="0.9"/><path d="M113.5 6 Q115.5 8 114.5 9.5" fill="none" stroke="#4d87c7" stroke-width="1.1"/><rect x="104" y="10.6" width="13" height="4.4" fill="#ffff00"/><path d="M122 7 H126 L124 9 Z" fill="#666"/><text x="133.5" y="10" font-family="Liberation Sans" font-size="10" fill="#666">A</text><rect x="131" y="10.6" width="13" height="4.4" fill="#000"/><path d="M149 7 H153 L151 9 Z" fill="#666"/></svg><svg style="position:absolute;left:218px;top:79px" width="8" height="8"><path d="M0.5 0.5 H6 M0.5 0.5 V6" stroke="#888" stroke-width="0.8" fill="none"/><path d="M3 3 L6.5 6.5 M6.5 3.5 V6.5 H3.5" stroke="#666" stroke-width="0.9" fill="none"/></svg><svg style="position:absolute;left:381px;top:79px" width="8" height="8"><path d="M0.5 0.5 H6 M0.5 0.5 V6" stroke="#888" stroke-width="0.8" fill="none"/><path d="M3 3 L6.5 6.5 M6.5 3.5 V6.5 H3.5" stroke="#666" stroke-width="0.9" fill="none"/></svg><div style="position:absolute;left:404px;top:20px;width:25px;height:24.5px;border:1px solid #acacac;box-sizing:border-box;background:#fff"></div><svg style="position:absolute;left:408px;top:31px" width="16" height="6"><rect x="2" y="1" width="11" height="0.9" fill="#999"/><rect x="4" y="3" width="7" height="0.9" fill="#999"/></svg><div style="position:absolute;left:451px;top:20px;width:24px;height:24.5px;border:1px solid #acacac;box-sizing:border-box;background:#fff"></div><svg style="position:absolute;left:411px;top:64.5px" width="80" height="4"><path d="M3.5 1 H7.5 L5.5 3 Z" fill="#aaa"/><path d="M51 1 H55 L53 3 Z" fill="#aaa"/></svg><div style="position:absolute;left:635px;top:20px;width:24px;height:24.5px;border:1px solid #acacac;box-sizing:border-box;background:#fff"></div><svg style="position:absolute;left:638px;top:28px" width="18" height="14"><path d="M3.3 0 V10.6 M5.2 0 V10.6 M9 0 V10.6 M11.6 0 V10.6 M14.3 0 V10 M3 3 H14.5 M3 6.8 H14.5 M3 8.4 H14.5" stroke="#9a9a9a" stroke-width="0.55" fill="none"/><path d="M3.3 10.6 H14 M3 8.3 H14.5" stroke="#8a8a8a" stroke-width="0.9"/><rect x="5.2" y="3" width="3.8" height="3.8" fill="#3c7ac2"/></svg><svg style="position:absolute;left:643px;top:64px" width="8" height="4"><path d="M1 1 H5 L3 3 Z" fill="#aaa"/></svg><svg style="position:absolute;left:500px;top:28px" width="130" height="20"></svg><svg style="position:absolute;left:500px;top:26px" width="40" height="22"><rect x="5.4" y="4.2" width="21.2" height="10.3" fill="#fff" stroke="#9a9a9a" stroke-width="0.8"/><path d="M10.8 4.2 V14.5 M20.1 4.2 V14.5 M5.4 5.4 H26.6 M5.4 10 H26.6" stroke="#c4c4c4" stroke-width="0.6"/><rect x="10.8" y="3.9" width="8.9" height="1.2" fill="#3c7ac2"/><path d="M11 5.8 H18 V7.9 H15 V9.7 H11 Z" fill="#e05a33"/><rect x="11" y="10" width="2.9" height="4.5" fill="#3c7ac2"/><rect x="16.2" y="9" width="11.6" height="9.5" fill="#fff" stroke="#8a8a8a" stroke-width="0.9"/><path d="M19.3 12.6 H24.3 M19.3 15 H24.3 M23.4 10.8 L20.2 16.6" stroke="#444" stroke-width="0.9"/></svg><svg style="position:absolute;left:550px;top:26px" width="80" height="24"><rect x="7.3" y="3.5" width="19" height="10" fill="#c5d9ee" stroke="#a0a0a0" stroke-width="0.8"/><rect x="7.7" y="3.9" width="4.7" height="9.2" fill="#fff"/><path d="M12.4 3.5 V13.5 M17.8 3.5 V13.5 M22.8 3.5 V13.5 M7.3 6.2 H26.3 M7.3 9.7 H26.3" stroke="#b5b5b5" stroke-width="0.6"/><path d="M30.6 5.3 L23.4 11.4" stroke="#6e6e6e" stroke-width="3.6" stroke-linecap="round"/><path d="M27.5 7.2 L26.3 8.5" stroke="#fff" stroke-width="4" stroke-opacity="0.5"/><path d="M12.7 18.9 C15 16 17.5 13.8 20.8 12.4 C22.7 11.9 24.3 13.2 23.9 15 C23.4 17.2 20.8 18.7 16.5 18.9 Z" fill="#3f7fc6"/><path d="M20.5 14 C21.8 13.4 22.6 14.2 22.2 15" fill="none" stroke="#fff" stroke-width="0.8" stroke-opacity="0.8"/><rect x="47.1" y="3.5" width="17" height="8.9" fill="#fff" stroke="#a0a0a0" stroke-width="0.8"/><rect x="51.7" y="3.9" width="12" height="3.1" fill="#c5d9ee"/><path d="M51.7 3.5 V12.4 M47.1 7 H64.1 M47.1 9.7 H64.1" stroke="#b5b5b5" stroke-width="0.6"/><path d="M70.5 4.9 L63.5 10.2" stroke="#6e6e6e" stroke-width="3.6" stroke-linecap="round"/><path d="M67.3 6.9 L66.2 8.2" stroke="#fff" stroke-width="4" stroke-opacity="0.5"/><path d="M53.3 17.4 C55.5 14.8 58 13 61 11.8 C63 11.3 64.5 12.6 64.1 14.3 C63.7 16.2 61 17.2 57 17.4 Z" fill="#3f7fc6"/><path d="M60.8 12.8 C62 12.4 62.8 13.2 62.4 14" fill="none" stroke="#fff" stroke-width="0.8" stroke-opacity="0.8"/></svg><svg style="position:absolute;left:532px;top:65px" width="100" height="6"><path d="M6.6 1.5 H9.8 L8.2 3 Z" fill="#777"/><path d="M46.2 1.5 H49.6 L47.9 3 Z" fill="#777"/><path d="M86.8 1.5 H90.2 L88.5 3 Z" fill="#777"/></svg><svg style="position:absolute;left:779px;top:78.6px" width="10" height="7"><path d="M1.5 5.5 L4.5 2.5 L7.5 5.5" fill="none" stroke="#666" stroke-width="1.5"/></svg><svg style="position:absolute;left:288px;top:98px" width="90" height="21"><path d="M11.5 6.5 L19 14 M19 6.5 L11.5 14" stroke="#b9b9b9" stroke-width="1"/><path d="M40.5 10.5 L43.5 13.5 L50 6.5" fill="none" stroke="#c6c6c6" stroke-width="1.4"/><text x="68.5" y="13" font-family="Liberation Serif" font-style="italic" font-weight="bold" font-size="10.5" fill="#777">f</text><text x="73" y="14" font-family="Liberation Serif" font-style="italic" font-weight="bold" font-size="7.5" fill="#777">x</text></svg><svg style="position:absolute;left:255px;top:105px" width="10" height="8"><path d="M1.8 2.8 L4 5.2 L6.2 2.8" fill="none" stroke="#555" stroke-width="1.7"/></svg><svg style="position:absolute;left:778px;top:104px" width="10" height="8"><path d="M1.5 2.5 L4 5 L6.5 2.5" fill="none" stroke="#888" stroke-width="1"/></svg><svg style="position:absolute;left:275px;top:100px" width="4" height="18"><path d="M1.5 4 V5.2 M1.5 7.3 V8.5 M1.5 10.6 V11.8" stroke="#a8a8a8" stroke-width="0.9"/></svg><div style="position:absolute;left:69.58px;top:135.84px;font-size:11px;line-height:12.64px;color:#2a5ea8;font-weight:normal;font-style:normal;white-space:pre;transform:scaleX(1.0464);transform-origin:0 0;">8.33</div><div style="position:absolute;left:68.81px;top:148.91px;font-size:9.6px;line-height:11.03px;color:#6b6b6b;font-weight:normal;font-style:normal;white-space:pre;transform:scaleX(1.0628);transform-origin:0 0;">points</div><div style="position:absolute;left:87.99px;top:191.41px;font-size:9.6px;line-height:11.03px;color:#3a6db5;font-weight:normal;font-style:normal;white-space:pre;transform:scaleX(1.0005);transform-origin:0 0;">eBook</div><div style="position:absolute;left:92.41px;top:217.11px;font-size:9.6px;line-height:11.03px;color:#3a6db5;font-weight:normal;font-style:normal;white-space:pre;transform:scaleX(0.9941);transform-origin:0 0;">Print</div><div style="position:absolute;left:77.99px;top:238.11px;font-size:9.6px;line-height:11.03px;color:#3a6db5;font-weight:normal;font-style:normal;white-space:pre;transform:scaleX(0.9622);transform-origin:0 0;">References</div><div style="position:absolute;left:168.00px;top:50.31px;font-size:9.6px;line-height:11.03px;color:#444;font-weight:normal;font-style:normal;white-space:pre;transform:scaleX(0.8962);transform-origin:0 0;">Paste</div><div style="position:absolute;left:170.00px;top:78.17px;font-size:9.2px;line-height:10.57px;color:#444;font-weight:normal;font-style:normal;white-space:pre;transform:scaleX(0.9408);transform-origin:0 0;">Clipboard</div><div style="position:absolute;left:296.00px;top:78.17px;font-size:9.2px;line-height:10.57px;color:#444;font-weight:normal;font-style:normal;white-space:pre;transform:scaleX(0.8700);transform-origin:0 0;">Font</div><div style="position:absolute;left:395.00px;top:50.91px;font-size:9.6px;line-height:11.03px;color:#444;font-weight:normal;font-style:normal;white-space:pre;transform:scaleX(1.0080);transform-origin:0 0;">Alignment</div><div style="position:absolute;left:445.81px;top:50.91px;font-size:9.6px;line-height:11.03px;color:#444;font-weight:normal;font-style:normal;white-space:pre;transform:scaleX(0.9968);transform-origin:0 0;">Number</div><div style="position:absolute;left:492.21px;top:49.71px;font-size:9.6px;line-height:11.03px;color:#444;font-weight:normal;font-style:normal;white-space:pre;transform:scaleX(1.0082);transform-origin:0 0;">Conditional</div><div style="position:absolute;left:489.20px;top:62.91px;font-size:9.6px;line-height:11.03px;color:#444;font-weight:normal;font-style:normal;white-space:pre;transform:scaleX(1.0031);transform-origin:0 0;">Formatting</div><div style="position:absolute;left:548.20px;top:49.71px;font-size:9.6px;line-height:11.03px;color:#444;font-weight:normal;font-style:normal;white-space:pre;transform:scaleX(0.9493);transform-origin:0 0;">Format as</div><div style="position:absolute;left:552.78px;top:62.91px;font-size:9.6px;line-height:11.03px;color:#444;font-weight:normal;font-style:normal;white-space:pre;transform:scaleX(0.9773);transform-origin:0 0;">Table</div><div style="position:absolute;left:601.00px;top:49.71px;font-size:9.6px;line-height:11.03px;color:#444;font-weight:normal;font-style:normal;white-space:pre;transform:scaleX(0.9074);transform-origin:0 0;">Cell</div><div style="position:absolute;left:592.21px;top:62.91px;font-size:9.6px;line-height:11.03px;color:#444;font-weight:normal;font-style:normal;white-space:pre;transform:scaleX(0.9111);transform-origin:0 0;">Styles</div><div style="position:absolute;left:546.22px;top:78.17px;font-size:9.2px;line-height:10.57px;color:#444;font-weight:normal;font-style:normal;white-space:pre;transform:scaleX(0.8318);transform-origin:0 0;">Styles</div><div style="position:absolute;left:637.62px;top:50.61px;font-size:9.6px;line-height:11.03px;color:#444;font-weight:normal;font-style:normal;white-space:pre;transform:scaleX(0.9390);transform-origin:0 0;">Cells</div><div style="position:absolute;left:169.22px;top:100.84px;font-size:11px;line-height:12.64px;color:#111;font-weight:normal;font-style:normal;white-space:pre;transform:scaleX(0.9683);transform-origin:0 0;">A1</div><div style="position:absolute;left:383.00px;top:101.05px;font-size:11px;line-height:12.64px;color:#111;font-weight:normal;font-style:normal;white-space:pre;transform:scaleX(1.0014);transform-origin:0 0;">Jay Corporation  has decided to prepare contribution income statements for</div><div style="position:absolute;left:162.80px;top:144.17px;font-size:8.6px;line-height:9.88px;color:#555;font-weight:normal;font-style:normal;white-space:pre;transform:scaleX(0.9412);transform-origin:0 0;">39</div><div style="position:absolute;left:162.80px;top:158.40px;font-size:8.6px;line-height:9.88px;color:#555;font-weight:normal;font-style:normal;white-space:pre;transform:scaleX(0.9412);transform-origin:0 0;">40</div><div style="position:absolute;left:162.80px;top:172.62px;font-size:8.6px;line-height:9.88px;color:#555;font-weight:normal;font-style:normal;white-space:pre;transform:scaleX(0.9412);transform-origin:0 0;">41</div><div style="position:absolute;left:162.80px;top:186.85px;font-size:8.6px;line-height:9.88px;color:#555;font-weight:normal;font-style:normal;white-space:pre;transform:scaleX(0.9412);transform-origin:0 0;">42</div><div style="position:absolute;left:162.80px;top:201.08px;font-size:8.6px;line-height:9.88px;color:#555;font-weight:normal;font-style:normal;white-space:pre;transform:scaleX(0.9412);transform-origin:0 0;">43</div><div style="position:absolute;left:162.80px;top:215.31px;font-size:8.6px;line-height:9.88px;color:#555;font-weight:normal;font-style:normal;white-space:pre;transform:scaleX(0.9412);transform-origin:0 0;">44</div><div style="position:absolute;left:162.80px;top:229.53px;font-size:8.6px;line-height:9.88px;color:#555;font-weight:normal;font-style:normal;white-space:pre;transform:scaleX(0.9412);transform-origin:0 0;">45</div><div style="position:absolute;left:162.80px;top:243.76px;font-size:8.6px;line-height:9.88px;color:#555;font-weight:normal;font-style:normal;white-space:pre;transform:scaleX(0.9412);transform-origin:0 0;">46</div><div style="position:absolute;left:162.80px;top:257.99px;font-size:8.6px;line-height:9.88px;color:#555;font-weight:normal;font-style:normal;white-space:pre;transform:scaleX(0.9412);transform-origin:0 0;">47</div><div style="position:absolute;left:162.80px;top:272.22px;font-size:8.6px;line-height:9.88px;color:#555;font-weight:normal;font-style:normal;white-space:pre;transform:scaleX(0.9412);transform-origin:0 0;">48</div><div style="position:absolute;left:162.80px;top:286.45px;font-size:8.6px;line-height:9.88px;color:#555;font-weight:normal;font-style:normal;white-space:pre;transform:scaleX(0.9412);transform-origin:0 0;">49</div><div style="position:absolute;left:162.80px;top:300.68px;font-size:8.6px;line-height:9.88px;color:#555;font-weight:normal;font-style:normal;white-space:pre;transform:scaleX(0.9412);transform-origin:0 0;">50</div><div style="position:absolute;left:162.80px;top:314.90px;font-size:8.6px;line-height:9.88px;color:#555;font-weight:normal;font-style:normal;white-space:pre;transform:scaleX(0.9412);transform-origin:0 0;">51</div><div style="position:absolute;left:162.80px;top:329.13px;font-size:8.6px;line-height:9.88px;color:#555;font-weight:normal;font-style:normal;white-space:pre;transform:scaleX(0.9412);transform-origin:0 0;">52</div><div style="position:absolute;left:162.80px;top:343.36px;font-size:8.6px;line-height:9.88px;color:#555;font-weight:normal;font-style:normal;white-space:pre;transform:scaleX(0.9412);transform-origin:0 0;">53</div><div style="position:absolute;left:162.80px;top:357.59px;font-size:8.6px;line-height:9.88px;color:#555;font-weight:normal;font-style:normal;white-space:pre;transform:scaleX(0.9412);transform-origin:0 0;">54</div><div style="position:absolute;left:162.80px;top:371.81px;font-size:8.6px;line-height:9.88px;color:#555;font-weight:normal;font-style:normal;white-space:pre;transform:scaleX(0.9412);transform-origin:0 0;">55</div><div style="position:absolute;left:162.80px;top:386.04px;font-size:8.6px;line-height:9.88px;color:#555;font-weight:normal;font-style:normal;white-space:pre;transform:scaleX(0.9412);transform-origin:0 0;">56</div><div style="position:absolute;left:162.80px;top:400.27px;font-size:8.6px;line-height:9.88px;color:#555;font-weight:normal;font-style:normal;white-space:pre;transform:scaleX(0.9412);transform-origin:0 0;">57</div><div style="position:absolute;left:162.80px;top:414.50px;font-size:8.6px;line-height:9.88px;color:#555;font-weight:normal;font-style:normal;white-space:pre;transform:scaleX(0.9412);transform-origin:0 0;">58</div><div style="position:absolute;left:162.80px;top:428.73px;font-size:8.6px;line-height:9.88px;color:#555;font-weight:normal;font-style:normal;white-space:pre;transform:scaleX(0.9412);transform-origin:0 0;">59</div><div style="position:absolute;left:162.80px;top:442.95px;font-size:8.6px;line-height:9.88px;color:#555;font-weight:normal;font-style:normal;white-space:pre;transform:scaleX(0.9412);transform-origin:0 0;">60</div><div style="position:absolute;left:162.80px;top:457.18px;font-size:8.6px;line-height:9.88px;color:#555;font-weight:normal;font-style:normal;white-space:pre;transform:scaleX(0.9412);transform-origin:0 0;">61</div><div style="position:absolute;left:162.80px;top:471.41px;font-size:8.6px;line-height:9.88px;color:#555;font-weight:normal;font-style:normal;white-space:pre;transform:scaleX(0.9412);transform-origin:0 0;">62</div><div style="position:absolute;left:162.80px;top:485.64px;font-size:8.6px;line-height:9.88px;color:#555;font-weight:normal;font-style:normal;white-space:pre;transform:scaleX(0.9412);transform-origin:0 0;">63</div><div style="position:absolute;left:162.80px;top:499.87px;font-size:8.6px;line-height:9.88px;color:#555;font-weight:normal;font-style:normal;white-space:pre;transform:scaleX(0.9412);transform-origin:0 0;">64</div><div style="position:absolute;left:162.80px;top:514.10px;font-size:8.6px;line-height:9.88px;color:#555;font-weight:normal;font-style:normal;white-space:pre;transform:scaleX(0.9412);transform-origin:0 0;">65</div><div style="position:absolute;left:293.45px;top:130.68px;font-size:7.2px;line-height:8.27px;color:#217346;font-weight:normal;font-style:normal;white-space:pre;transform:translateX(-50%);">A</div><div style="position:absolute;left:458.20px;top:130.68px;font-size:7.2px;line-height:8.27px;color:#555;font-weight:normal;font-style:normal;white-space:pre;transform:translateX(-50%);">B</div><div style="position:absolute;left:550.60px;top:130.68px;font-size:7.2px;line-height:8.27px;color:#555;font-weight:normal;font-style:normal;white-space:pre;transform:translateX(-50%);">C</div><div style="position:absolute;left:617.80px;top:130.68px;font-size:7.2px;line-height:8.27px;color:#555;font-weight:normal;font-style:normal;white-space:pre;transform:translateX(-50%);">D</div><div style="position:absolute;left:663.20px;top:130.68px;font-size:7.2px;line-height:8.27px;color:#555;font-weight:normal;font-style:normal;white-space:pre;transform:translateX(-50%);">E</div><div style="position:absolute;left:708.70px;top:130.68px;font-size:7.2px;line-height:8.27px;color:#555;font-weight:normal;font-style:normal;white-space:pre;transform:translateX(-50%);">F</div><div style="position:absolute;left:754.05px;top:130.68px;font-size:7.2px;line-height:8.27px;color:#555;font-weight:normal;font-style:normal;white-space:pre;transform:translateX(-50%);">G</div><div style="position:absolute;left:178.00px;top:144.10px;font-size:9.0px;line-height:10.34px;color:#000;font-weight:normal;font-style:normal;white-space:pre;transform:scaleX(1.0586);transform-origin:0 0;">Fixed shipping cost:</div><div style="position:absolute;left:268.00px;top:144.10px;font-size:9.0px;line-height:10.34px;color:#000;font-weight:normal;font-style:italic;white-space:pre;transform:scaleX(1.0874);transform-origin:0 0;">(Note: please use the highest activity point to compute the total fixed cost.)</div><div style="position:absolute;left:185.80px;top:158.33px;font-size:9.0px;line-height:10.34px;color:#000;font-weight:normal;font-style:normal;white-space:pre;transform:scaleX(1.0851);transform-origin:0 0;">Total shipping cost at high level of activity</div><div style="position:absolute;left:185.80px;top:172.56px;font-size:9.0px;line-height:10.34px;color:#000;font-weight:normal;font-style:normal;white-space:pre;transform:scaleX(1.0666);transform-origin:0 0;">Less: Variable shipping cost at high level of activity</div><div style="position:absolute;left:178.00px;top:186.79px;font-size:9.0px;line-height:10.34px;color:#000;font-weight:normal;font-style:normal;white-space:pre;transform:scaleX(1.0716);transform-origin:0 0;">Total fixed shipping cost</div><div style="position:absolute;left:178.00px;top:215.24px;font-size:9.0px;line-height:10.34px;color:#000;font-weight:normal;font-style:normal;white-space:pre;transform:scaleX(1.0913);transform-origin:0 0;">2. Prepare a contribution margin income statement for Quarter 1 of Year 3.</div><div style="position:absolute;left:353.00px;top:245.35px;font-size:9.0px;line-height:10.34px;color:#000;font-weight:normal;font-style:normal;white-space:pre;transform:scaleX(1.0670);transform-origin:0 0;">Jay Corporation</div><div style="position:absolute;left:326.00px;top:258.96px;font-size:9.0px;line-height:10.34px;color:#000;font-weight:normal;font-style:normal;white-space:pre;transform:scaleX(1.0695);transform-origin:0 0;">Budgeted Income Statement</div><div style="position:absolute;left:341.80px;top:272.46px;font-size:9.0px;line-height:10.34px;color:#000;font-weight:normal;font-style:normal;white-space:pre;transform:scaleX(1.0551);transform-origin:0 0;">For Year 3, Quarter 1</div><div style="position:absolute;left:178.01px;top:300.61px;font-size:9.0px;line-height:10.34px;color:#000;font-weight:normal;font-style:normal;white-space:pre;transform:scaleX(0.9247);transform-origin:0 0;">Sales</div><div style="position:absolute;left:178.00px;top:314.84px;font-size:9.0px;line-height:10.34px;color:#000;font-weight:normal;font-style:normal;white-space:pre;transform:scaleX(1.0594);transform-origin:0 0;">Variable expenses:</div><div style="position:absolute;left:185.80px;top:329.07px;font-size:9.0px;line-height:10.34px;color:#000;font-weight:normal;font-style:normal;white-space:pre;transform:scaleX(1.0410);transform-origin:0 0;">Cost of goods sold</div><div style="position:absolute;left:185.80px;top:343.30px;font-size:9.0px;line-height:10.34px;color:#000;font-weight:normal;font-style:normal;white-space:pre;transform:scaleX(1.0334);transform-origin:0 0;">Sales commissions</div><div style="position:absolute;left:185.80px;top:357.52px;font-size:9.0px;line-height:10.34px;color:#000;font-weight:normal;font-style:normal;white-space:pre;transform:scaleX(1.0728);transform-origin:0 0;">Shipping expense (Variable portion)</div><div style="position:absolute;left:178.00px;top:371.75px;font-size:9.0px;line-height:10.34px;color:#000;font-weight:normal;font-style:normal;white-space:pre;transform:scaleX(1.0589);transform-origin:0 0;">Total variable expenses</div><div style="position:absolute;left:178.00px;top:385.98px;font-size:9.0px;line-height:10.34px;color:#000;font-weight:normal;font-style:normal;white-space:pre;transform:scaleX(1.1025);transform-origin:0 0;">Contribution margin</div><div style="position:absolute;left:178.00px;top:400.21px;font-size:9.0px;line-height:10.34px;color:#000;font-weight:normal;font-style:normal;white-space:pre;transform:scaleX(1.0222);transform-origin:0 0;">Fixed expenses:</div><div style="position:absolute;left:185.80px;top:414.44px;font-size:9.0px;line-height:10.34px;color:#000;font-weight:normal;font-style:normal;white-space:pre;transform:scaleX(1.0763);transform-origin:0 0;">Fixed Manufacturing Overhead</div><div style="position:absolute;left:185.80px;top:428.67px;font-size:9.0px;line-height:10.34px;color:#000;font-weight:normal;font-style:normal;white-space:pre;transform:scaleX(1.0683);transform-origin:0 0;">Administrative Salaries</div><div style="position:absolute;left:185.80px;top:442.89px;font-size:9.0px;line-height:10.34px;color:#000;font-weight:normal;font-style:normal;white-space:pre;transform:scaleX(1.0706);transform-origin:0 0;">Shipping expense (Fixed portion)</div><div style="position:absolute;left:185.80px;top:457.12px;font-size:9.0px;line-height:10.34px;color:#000;font-weight:normal;font-style:normal;white-space:pre;transform:scaleX(1.0752);transform-origin:0 0;">Depreciation expense</div><div style="position:absolute;left:178.00px;top:471.35px;font-size:9.0px;line-height:10.34px;color:#000;font-weight:normal;font-style:normal;white-space:pre;transform:scaleX(1.0495);transform-origin:0 0;">Total fixed expenses</div><div style="position:absolute;left:178.00px;top:485.58px;font-size:9.0px;line-height:10.34px;color:#000;font-weight:normal;font-style:normal;white-space:pre;transform:scaleX(1.0963);transform-origin:0 0;">Net operating income</div><div style="position:absolute;left:252.60px;top:529.53px;font-size:9.8px;line-height:11.26px;color:#217346;font-weight:bold;font-style:normal;white-space:pre;transform:scaleX(1.1266);transform-origin:0 0;">Sheet1</div><div style="position:absolute;left:235.00px;top:25.03px;font-size:10.8px;line-height:12.41px;color:#222;font-weight:normal;font-style:normal;white-space:pre;transform:scaleX(0.9480);transform-origin:0 0;">Calibri</div><div style="position:absolute;left:322.00px;top:25.03px;font-size:10.8px;line-height:12.41px;color:#777;font-weight:normal;font-style:normal;white-space:pre;transform:scaleX(0.6240);transform-origin:0 0;">11</div><div style="position:absolute;left:458.00px;top:28.13px;font-size:9.8px;line-height:11.26px;color:#555;font-weight:bold;font-style:normal;white-space:pre;transform:scaleX(1.0323);transform-origin:0 0;">%</div><div style="position:absolute;left:0px;top:0px;width:1036px;height:29px;background:#fafafa;"></div><div style="position:absolute;left:0px;top:29px;width:1036px;height:1px;background:#e6e6e6;"></div><svg style="position:absolute;left:273px;top:0px" width="17" height="17" viewBox="0 0 17 17"><circle cx="8.3" cy="8" r="8" fill="#3b73b9"/><circle cx="8.3" cy="3.9" r="1.3" fill="#fff"/><path d="M6.3 6.4h3v5.8h1.1v1.4H6.2v-1.4h1.1V7.8h-1z" fill="#fff"/></svg><div style="position:absolute;left:624px;top:-2px;width:56px;height:20px;background:#e7e5e9;border-radius:10px;"></div><div style="position:absolute;left:68.79px;top:1.07px;font-size:12.3px;line-height:14.13px;color:#2e2e2e;font-weight:normal;font-style:normal;white-space:pre;transform:scaleX(1.0120);transform-origin:0 0;">Excel Assignment 2 (Chapters 4 - 6)</div><div style="position:absolute;left:640.00px;top:2.50px;font-size:8.4px;line-height:9.65px;color:#333;font-weight:normal;font-style:normal;white-space:pre;transform:scaleX(1.0105);transform-origin:0 0;">Saved</div></body></html>
